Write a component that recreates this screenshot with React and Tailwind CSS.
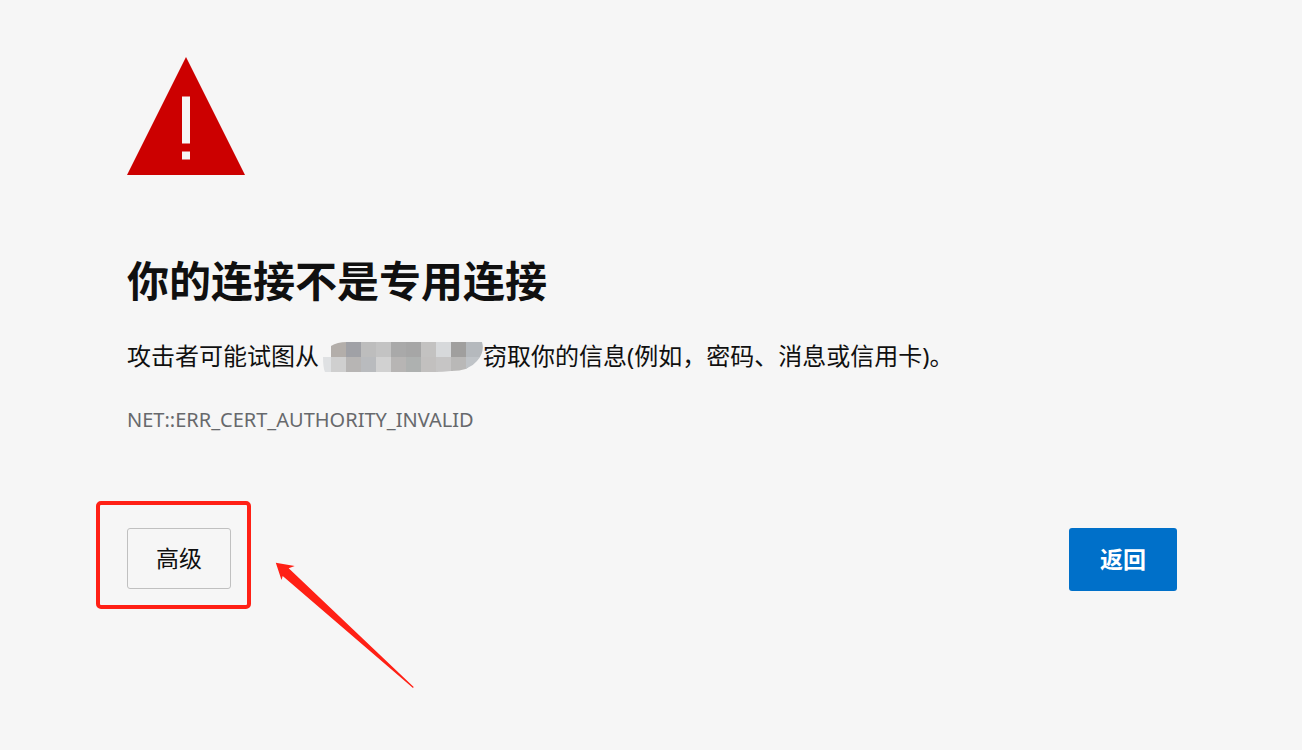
import React from 'react';

const censorTop = ['#b3aeaa', '#a0a1a6', '#bdbdbd', '#c3c3c3', '#a9a9a9', '#a6a6a6', '#c3c2c1', '#d7d9db', '#a09f9e', '#b5b9bd'];
const censorBottom = ['#cfcfcf', '#b7b5b4', '#b9bbbe', '#d1d1d1', '#b7b5b4', '#aeb1b0', '#c2c0bf', '#c6c5c5', '#b9b8b7', '#bfc3c7'];

const WarningIcon = () => (
  <svg width="118" height="118" viewBox="0 0 118 118" aria-hidden="true">
    <path d="M59 0L118 118H0Z" fill="#cc0000" />
    <path d="M55 39.5h8v47h-8zM55 94.500h8v8h-8z" fill="#f6f6f6" />
  </svg>
);

const HiddenHost = () => (
  <svg className="inline-block align-top mt-1 ml-1" width="160" height="30" viewBox="0 0 160 30" aria-hidden="true">
    <clipPath id="host-shape">
      <path d="M8 4Q14 0 24 0H159Q162 10 154 19Q146 29 128 29Q120 30 112 30H2Q0 26 0 15H8Z" />
    </clipPath>
    <g clipPath="url(#host-shape)" shapeRendering="crispEdges">
      <rect x="0" y="15" width="8" height="15" fill="#dfe1e3" />
      {censorTop.map((color, i) => (
        <rect key={`top-${i}`} x={8 + i * 15} y="0" width="17" height="15" fill={color} />
      ))}
      {censorBottom.map((color, i) => (
        <rect key={`bottom-${i}`} x={8 + i * 15} y="15" width="17" height="15" fill={color} />
      ))}
    </g>
  </svg>
);

const App = () => {
  return (
    <main className="min-h-screen bg-[#f6f6f6] pl-[127px] pr-[125px] pt-[57px] text-[#101010] font-['Noto_Sans','Noto_Sans_CJK_SC',sans-serif]">
      <WarningIcon />

      <h1 className="mt-[78px] text-[42px] leading-[56px] font-bold">你的连接不是专用连接</h1>

      <p className="mt-[29px] text-2xl leading-9">
        攻击者可能试图从
        <HiddenHost />
        窃取你的信息(例如，密码、消息或信用卡)。
      </p>

      <p className="mt-8 text-xl leading-7 text-[#67696c]">NET::ERR_CERT_AUTHORITY_INVALID</p>

      <div className="mt-[94px] flex items-start justify-between">
        <div className="relative">
          <button type="button" className="block rounded-[3px] border border-[#c0c0c0] px-7 py-3 text-[23px] leading-[35px]">
            高级
          </button>

          {/* Highlight around the advanced button */}
          <div className="pointer-events-none absolute -left-[31px] -right-5 -top-[27px] -bottom-5 rounded-[5px] border-4 border-[#ff2015]" />
          <svg className="pointer-events-none absolute left-[148px] top-[34px]" width="139" height="126" viewBox="0 0 139 126" aria-hidden="true">
            <path d="M0.8 0.8L19.700 4L13.700 6.300L138.700 125L138 126L7.700 14L6.500 18Z" fill="#ff2015" />
          </svg>
        </div>

        <button type="button" className="rounded-[3px] bg-[#0070c9] px-[31px] py-[14px] text-[23px] leading-[35px] font-bold text-white">
          返回
        </button>
      </div>
    </main>
  );
};

export default App;
